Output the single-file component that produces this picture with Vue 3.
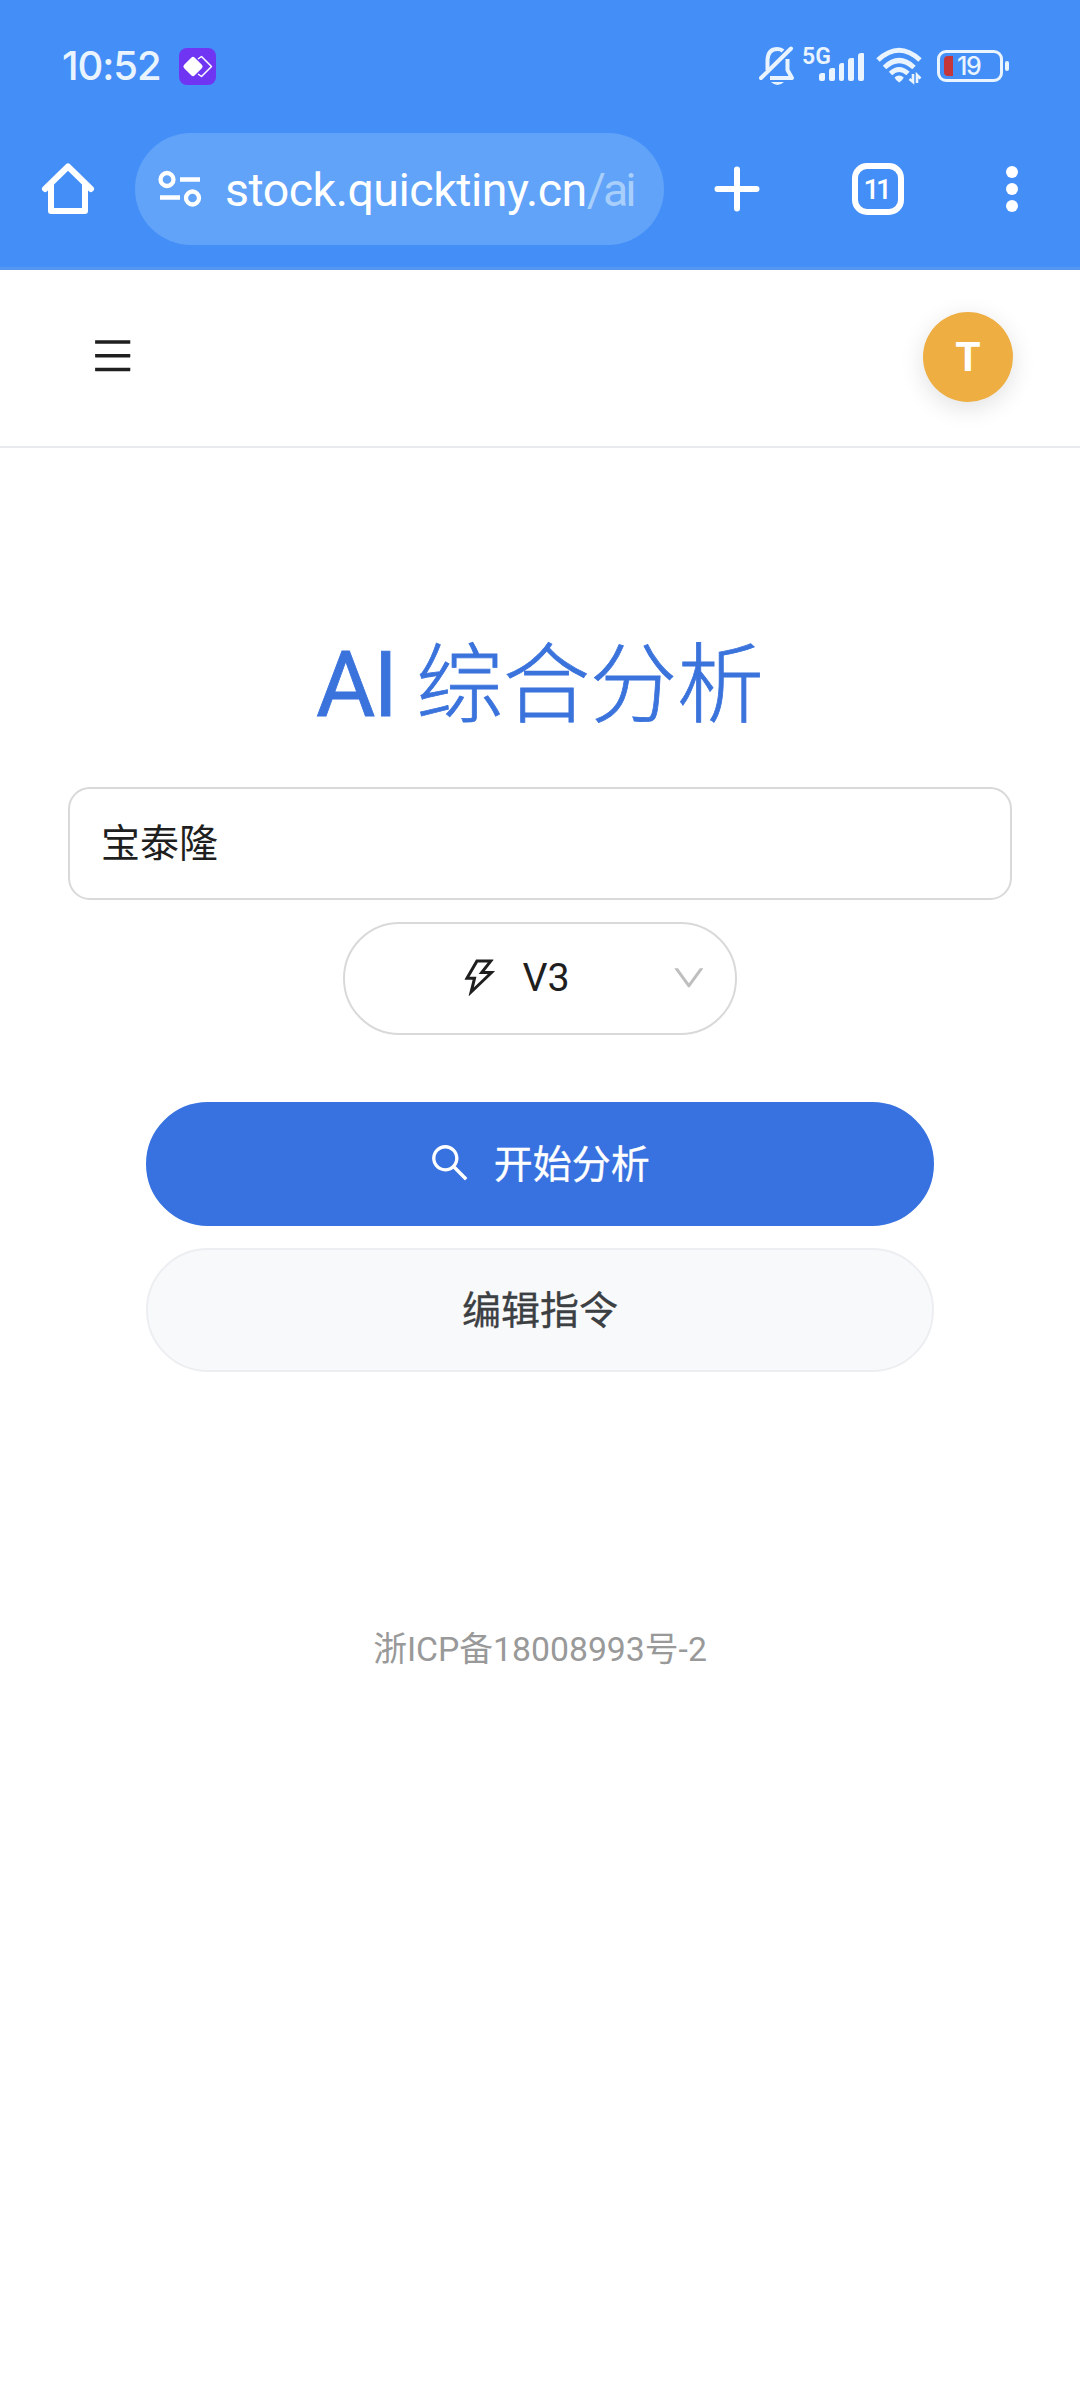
<script setup>
import { ref } from 'vue'

const keyword = ref('宝泰隆')
const model = ref('V3')
const tabCount = ref(11)
const signalBars = [8, 13, 18, 23, 28]
</script>

<template>
<div id="screen">
    <header id="browser">
        <div id="status-bar">
            <span class="clock">10:52</span>
            <svg class="app-badge" width="37" height="37" viewBox="0 0 37 37">
                <rect width="37" height="37" rx="8" fill="#7035f2" />
                <path d="M19 11 L22.500 8.500 L32.500 18.500 L22.500 28.500 L19 26" fill="none" stroke="#fff" stroke-width="1.500" stroke-linejoin="round" />
                <rect x="6.500" y="11" width="15" height="15" rx="2.500" transform="rotate(45 14 18.500)" fill="#fff" />
            </svg>
            <div class="status-right">
                <svg class="bell" width="36" height="40" viewBox="0 0 36 40" fill="none" stroke="#e9f4ff" stroke-width="4">
                    <path d="M8.500 24 V14 Q9 3 18.500 3 Q22 3 24 5" />
                    <path d="M28.500 13 V24 L33 32 H11" stroke-linejoin="round" />
                    <path d="M2 32 L32 2.500" stroke-linecap="round" />
                    <path d="M12 36 H25 Q18.500 42 12 36 Z" fill="#e9f4ff" stroke="none" />
                </svg>
                <div class="signal">
                    <span class="net">5G</span>
                    <i v-for="h in signalBars" :key="h" :style="{ height: h + 'px' }"></i>
                </div>
                <svg class="wifi" width="47" height="38" viewBox="0 0 47 38" fill="none" stroke="#e9f4ff" stroke-width="5">
                    <path d="M2 13 Q23 -6.500 44 13" />
                    <path d="M8.500 20.500 Q23 6.500 38 20.500" />
                    <path d="M14.500 26.500 Q23 18.500 32 26.500" />
                    <path d="M18.500 30.500 Q23 26.500 27.800 30.500 Q26.500 33.500 23.200 35.500 Q19.800 33.500 18.500 30.500 Z" fill="#e9f4ff" stroke="none" />
                    <path d="M37 27 V35 L33.500 32 M41 36 V28 L44.500 31.500" stroke-width="2.600" />
                </svg>
                <div class="battery">
                    <i class="level"></i>
                    <span>19</span>
                </div>
            </div>
        </div>
        <div id="toolbar">
            <svg class="home" width="54" height="54" viewBox="0 0 54 54" fill="none" stroke="#fff" stroke-width="6" stroke-linejoin="round" stroke-linecap="round">
                <path d="M4 27 L27 4.500 L50 27" />
                <path d="M10 23 V49 H44 V23" />
            </svg>
            <div class="url-pill">
                <svg width="44" height="38" viewBox="0 0 44 38" fill="none" stroke="#fff" stroke-width="4.300">
                    <circle cx="9" cy="9.500" r="6.500" />
                    <path d="M22 9.500 H42 M2 27.500 H22" />
                    <circle cx="34.500" cy="28" r="6.500" />
                </svg>
                <span class="url">stock.quicktiny.cn<em>/ai</em></span>
            </div>
            <svg class="plus" width="46" height="46" viewBox="0 0 46 46" stroke="#fff" stroke-width="6" stroke-linecap="round">
                <path d="M23 3.500 V42.500 M3.500 23 H42.500" />
            </svg>
            <div class="tabs">{{ tabCount }}</div>
            <svg class="more" width="12" height="46" viewBox="0 0 12 46" fill="#fff">
                <circle cx="6" cy="6" r="6" />
                <circle cx="6" cy="23" r="6" />
                <circle cx="6" cy="40" r="6" />
            </svg>
        </div>
    </header>

    <nav id="site-nav">
        <svg class="menu" width="39.400" height="39.400" viewBox="64 64 896 896" fill="#1f1f1f">
            <path d="M904 160H120c-4.400 0-8 3.600-8 8v64c0 4.400 3.600 8 8 8h784c4.400 0 8-3.600 8-8v-64c0-4.400-3.600-8-8-8zm0 624H120c-4.400 0-8 3.600-8 8v64c0 4.400 3.600 8 8 8h784c4.400 0 8-3.600 8-8v-64c0-4.400-3.600-8-8-8zm0-312H120c-4.400 0-8 3.600-8 8v64c0 4.400 3.600 8 8 8h784c4.400 0 8-3.600 8-8v-64c0-4.400-3.600-8-8-8z" />
        </svg>
        <div class="avatar">T</div>
    </nav>

    <main>
        <h1><span class="latin">AI</span>综合分析</h1>
        <input v-model="keyword" class="keyword" type="text" />
        <div class="select">
            <svg class="bolt" width="39.400" height="39.400" viewBox="64 64 896 896" fill="#1f1f1f">
                <path d="M848 359.300H627.700L825.800 109c4.100-5.300.4-13-6.300-13H436c-2.800 0-5.500 1.500-6.900 4L170 547.500c-3.100 5.300.7 12 6.900 12h174.400l-89.400 357.600c-1.900 7.800 7.500 13.300 13.300 7.700L853.500 373c5.200-4.900 1.700-13.700-5.500-13.700zM378.200 732.500l60.300-241H281.100l189.600-327.400h224.600L487 427.400h211L378.200 732.500z" />
            </svg>
            <span>{{ model }}</span>
            <svg class="arrow" width="33.750" height="33.750" viewBox="64 64 896 896" fill="#bfbfbf">
                <path d="M884 256h-75c-5.100 0-9.900 2.500-12.900 6.600L512 654.200 227.900 262.600c-3-4.100-7.800-6.600-12.900-6.600h-75c-6.500 0-10.300 7.400-6.500 12.700l352.600 486.100c12.800 17.600 39 17.600 51.700 0l352.600-486.100c3.900-5.300.1-12.700-6.400-12.700z" />
            </svg>
        </div>
        <button class="btn primary">
            <svg width="39.400" height="39.400" viewBox="64 64 896 896" fill="#fff">
                <path d="M909.600 854.500L649.900 594.800C690.200 542.700 712 479 712 412c0-80.200-31.300-155.400-87.900-212.100-56.600-56.700-132-87.900-212.100-87.900s-155.500 31.300-212.100 87.900C143.200 256.500 112 331.800 112 412c0 80.100 31.300 155.500 87.900 212.100C256.500 680.800 331.800 712 412 712c67 0 130.600-21.800 182.700-62l259.700 259.600a8.200 8.200 0 0011.600 0l43.600-43.500a8.200 8.200 0 000-11.600zM570.400 570.400C528 612.700 471.800 636 412 636s-116-23.300-158.400-65.600C211.300 528 188 471.800 188 412s23.300-116.100 65.600-158.400C296 211.300 352.200 188 412 188s116.100 23.200 158.400 65.600S636 352.200 636 412s-23.300 116.100-65.600 158.400z" />
            </svg>
            <span>开始分析</span>
        </button>
        <button class="btn plain">编辑指令</button>
        <footer>浙ICP备18008993号-2</footer>
    </main>
</div>
</template>

<style>
body {
    margin: 0;
    background: #fff;
}
</style>

<style scoped>
#screen {
    width: 1080px;
    height: 2400px;
    overflow: hidden;
    background: #fff;
    color: #1f1f1f;
    font-family: Roboto, "Noto Sans CJK SC", sans-serif;
}

#screen * {
    box-sizing: border-box;
}

svg {
    display: block;
    flex: none;
}

/* Browser chrome */

#browser {
    height: 270px;
    background: #448ef7;
    border-bottom: 3px solid #5596f0;
}

#status-bar {
    display: flex;
    align-items: center;
    height: 133px;
    padding-left: 62px;
    color: #e9f4ff;
}

.clock {
    width: 117px;
    padding-bottom: 2px;
    font-family: Inter, sans-serif;
    font-size: 40px;
    font-weight: 500;
    letter-spacing: -1.1px;
}

.status-right {
    display: flex;
    align-items: center;
    margin-left: auto;
    padding: 0 77px 2px 0;
}

.signal {
    display: flex;
    align-items: flex-end;
    gap: 4px;
    position: relative;
    width: 62px;
    height: 31px;
    margin-left: 7px;
    padding-left: 17px;
}

.signal i {
    width: 6px;
    border-radius: 3px 1px 2px 2px;
    background: #e9f4ff;
}

.net {
    position: absolute;
    left: 0;
    top: -4px;
    font-size: 23px;
    font-weight: 600;
    line-height: 22px;
}

.wifi {
    margin-left: 12px;
}

.battery {
    display: flex;
    align-items: center;
    position: relative;
    width: 66px;
    height: 32px;
    margin-left: 14px;
    padding-left: 4px;
    border: 3px solid #e9f4ff;
    border-radius: 9px;
    font-family: Inter, sans-serif;
    font-size: 25px;
    font-weight: 500;
    letter-spacing: -1.5px;
}

.battery::after {
    content: "";
    position: absolute;
    right: -9px;
    top: 8px;
    width: 4px;
    height: 10px;
    border-radius: 2px;
    background: #e9f4ff;
}

.level {
    width: 9px;
    height: 20px;
    margin-right: 4px;
    border-radius: 4px 0 0 4px;
    background: #c5363b;
}

#toolbar {
    display: flex;
    align-items: center;
    height: 112px;
    padding-left: 41px;
}

.url-pill {
    display: flex;
    align-items: center;
    width: 529px;
    height: 112px;
    margin-left: 40px;
    padding-left: 23px;
    border-radius: 56px;
    background: #60a3f8;
}

.url {
    margin-left: 23px;
    padding-top: 1px;
    color: #fff;
    font-size: 46.5px;
    font-weight: 400;
    letter-spacing: -0.5px;
    white-space: nowrap;
}

.url em {
    color: #a8cffc;
    font-style: normal;
    letter-spacing: -3px;
}

.plus {
    margin-left: 50px;
}

.tabs {
    width: 52px;
    height: 52px;
    margin-left: 92px;
    border: 6px solid #fff;
    border-radius: 15px;
    color: #fff;
    font-size: 28px;
    font-weight: 500;
    letter-spacing: -3.5px;
    line-height: 42px;
    text-align: center;
    text-indent: -4px;
}

.more {
    margin-left: 102px;
}

/* Page */

#site-nav {
    display: flex;
    align-items: center;
    justify-content: space-between;
    height: 178px;
    padding: 0 67px 2px 93px;
    border-bottom: 2px solid #e8eaed;
}

.menu {
    margin-bottom: 2px;
}

.avatar {
    width: 90px;
    height: 90px;
    border-radius: 50%;
    background: #eeae42;
    box-shadow: 0 6px 24px rgba(0, 0, 0, 0.12);
    color: #fff;
    font-size: 41px;
    font-weight: 700;
    line-height: 90px;
    text-align: center;
}

main {
    display: flex;
    flex-direction: column;
    align-items: center;
}

h1 {
    display: flex;
    align-items: baseline;
    height: 120px;
    margin: 170px 0 0;
    color: #3b73dc;
    font-family: "Noto Sans CJK SC", sans-serif;
    font-size: 87px;
    font-weight: 300;
    line-height: 120px;
    -webkit-text-stroke: 0.8px #3b73dc;
}

h1 .latin {
    margin-right: 20px;
    font-family: Roboto, sans-serif;
    font-size: 91px;
    font-weight: 430;
    letter-spacing: -2px;
}

.keyword {
    width: 944px;
    height: 113px;
    margin: 49px 0 22px;
    padding: 0 32px 7px 31px;
    border: 2px solid #d9d9d9;
    border-radius: 22px;
    outline: none;
    background: #fff;
    color: #1f1f1f;
    font-family: "Noto Sans CJK SC", sans-serif;
    font-size: 39px;
}

.select {
    display: flex;
    align-items: center;
    width: 394px;
    height: 113px;
    padding: 0 29px 2px 115px;
    border: 2px solid #d9d9d9;
    border-radius: 57px;
    background: #fff;
    font-size: 39.4px;
}

.select span {
    margin-left: 23px;
}

.arrow {
    margin-left: auto;
}

.btn {
    display: flex;
    align-items: center;
    justify-content: center;
    gap: 24px;
    width: 788px;
    height: 124px;
    padding: 0 0 7px;
    border: 2px solid #eceef1;
    border-radius: 62px;
    background: #f8f9fb;
    color: #3c4043;
    font-family: "Noto Sans CJK SC", sans-serif;
    font-size: 39px;
    -webkit-text-stroke: 0.3px currentColor;
}

.primary {
    margin: 67px 0 22px;
    border-color: #3872e0;
    background: #3872e0;
    color: #fff;
}

.primary svg {
    margin-top: 4px;
}

footer {
    margin-top: 253px;
    color: #999;
    font-size: 33.75px;
    line-height: 50px;
}
</style>
